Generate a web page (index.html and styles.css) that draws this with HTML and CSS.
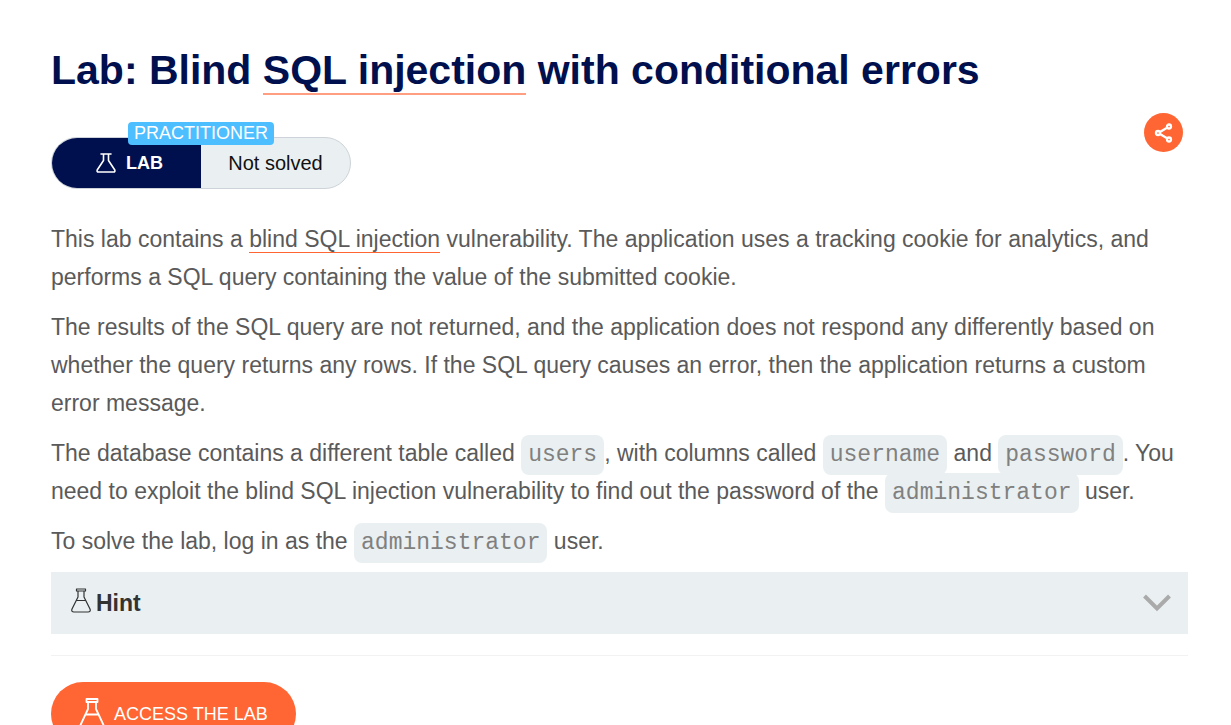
FILE: index.html
```html
<!DOCTYPE html>
<html lang="en">
<head>
<meta charset="utf-8">
<title>Lab: Blind SQL injection with conditional errors</title>
<meta name="viewport" content="width=device-width, initial-scale=1">
<link rel="stylesheet" href="styles.css">
</head>
<body>
<main class="page">
  <h1 class="title">Lab: Blind <a class="link" href="#sql-injection">SQL injection</a> with conditional errors</h1>

  <div class="toolbar">
    <div class="status">
      <span class="status-level">PRACTITIONER</span>
      <span class="status-kind">
        <svg class="status-icon" viewBox="0 0 20 20" fill="none" stroke="currentColor" stroke-width="1.6" stroke-linecap="round" stroke-linejoin="round" aria-hidden="true"><path d="M5 1H15M7.500 1V7.500L1.200 17Q.6 19 2.500 19H17.500Q19.400 19 18.800 17L12.500 7.500V1"/></svg>
        LAB
      </span>
      <span class="status-state">Not solved</span>
    </div>
    <button class="share" type="button" aria-label="Share">
      <svg class="share-icon" viewBox="0 0 20 20" fill="none" stroke="currentColor" stroke-width="2.300" aria-hidden="true"><circle cx="4" cy="10" r="2"/><circle cx="15" cy="3.500" r="2"/><circle cx="15" cy="16.500" r="2"/><path d="M6 9L13 4.700M6 11L13 15.300"/></svg>
    </button>
  </div>

  <div class="description">
    <p>This lab contains a <a class="link" href="#blind">blind SQL injection</a> vulnerability. The application uses a tracking cookie for analytics, and performs a SQL query containing the value of the submitted cookie.</p>
    <p>The results of the SQL query are not returned, and the application does not respond any differently based on whether the query returns any rows. If the SQL query causes an error, then the application returns a custom error message.</p>
    <p>The database contains a different table called <code>users</code>, with columns called <code>username</code> and <code>password</code>. You need to exploit the blind SQL injection vulnerability to find out the password of the <code>administrator</code> user.</p>
    <p>To solve the lab, log in as the <code>administrator</code> user.</p>
  </div>

  <button class="hint" type="button" aria-expanded="false">
    <svg class="hint-icon" viewBox="0 0 20 25" fill="none" stroke="currentColor" stroke-width="1.200" stroke-linejoin="round" aria-hidden="true"><path d="M5.500 1H14.500V3H5.500ZM7 3V9L1 21Q0 24 3 24H17Q20 24 19 21L13 9V3M5 12.500H15"/></svg>
    <span>Hint</span>
    <svg class="hint-arrow" viewBox="0 0 28 18" fill="none" stroke="currentColor" stroke-width="4" aria-hidden="true"><path d="M1.500 2L14 14.500L26.500 2"/></svg>
  </button>

  <hr class="rule">

  <a class="access" href="#lab">
    <svg class="access-icon" viewBox="0 0 26 32" fill="none" stroke="currentColor" stroke-width="1.800" stroke-linejoin="round" aria-hidden="true"><path d="M7.500 1H18.500V4H7.500ZM9 4V11L1.500 27Q0 31 4 31H22Q26 31 24.500 27L17 11V4M6.500 16.500H19.500"/></svg>
    ACCESS THE LAB
  </a>
</main>
</body>
</html>
```
FILE: styles.css
```css
* {
  box-sizing: border-box;
}

body {
  margin: 0;
  background: #fff;
  color: #5a5a5a;
  font-family: "Liberation Sans", Arial, sans-serif;
  font-size: 23px;
  line-height: 38px;
}

.page {
  padding: 44px 43px 0 51px;
}

.title {
  margin: 0;
  color: #00104e;
  font-size: 41px;
  line-height: 52px;
}

.link {
  color: inherit;
  text-decoration: none;
  border-bottom: 1px solid #ff6633;
}

.title .link {
  border-bottom: 2px solid #ff9e80;
}

.toolbar {
  display: flex;
  justify-content: space-between;
  align-items: flex-start;
  margin-top: 17px;
  padding-right: 5px;
}

.status {
  position: relative;
  display: flex;
  width: 300px;
  height: 52px;
  margin-top: 24px;
  border: 1px solid #cdd3d8;
  border-radius: 26px;
  background: #eaf0f2;
  color: #111;
  font-size: 20px;
  line-height: 48px;
}

.status-kind,
.status-state {
  display: flex;
  width: 50%;
  align-items: center;
  justify-content: center;
}

.status-kind {
  gap: 10px;
  padding-left: 6px;
  border-radius: 25px 0 0 25px;
  background: #00104e;
  color: #fff;
  font-size: 18px;
  font-weight: bold;
}

.status-icon {
  width: 20px;
  height: 20px;
}

.status-level {
  position: absolute;
  top: -16px;
  left: 50%;
  padding: 0 6px;
  transform: translateX(-50%);
  border-radius: 4px;
  background: #4dbeff;
  color: #fff;
  font-size: 18px;
  line-height: 23px;
}

.share {
  display: flex;
  align-items: center;
  justify-content: center;
  width: 39px;
  height: 39px;
  padding: 0;
  border: 0;
  border-radius: 50%;
  background: #ff6633;
  color: #fff;
}

.share-icon {
  width: 20px;
  height: 20px;
}

.description {
  margin-top: 31px;
}

.description p {
  margin: 0 0 12px;
}

code {
  padding: 7px;
  border-radius: 8px;
  background: #eaf0f2;
  color: #808080;
  font-family: "Liberation Mono", "Courier New", monospace;
  font-size: 23px;
  line-height: 1;
}

.hint {
  display: flex;
  align-items: center;
  width: 100%;
  height: 62px;
  padding: 0 17px 0 20px;
  gap: 5px;
  border: 0;
  background: #eaf0f2;
  color: #333;
  font: bold 23px "Liberation Sans", Arial, sans-serif;
}

.hint-icon {
  width: 20px;
  height: 25px;
  margin-bottom: 6px;
}

.hint-arrow {
  width: 28px;
  height: 18px;
  margin-left: auto;
  color: #aaa;
}

.rule {
  margin: 21px 0 26px;
  border: 0;
  border-top: 1px solid #f0f2f3;
}

.access {
  display: inline-flex;
  align-items: center;
  height: 64px;
  padding: 0 28px;
  gap: 9px;
  border-radius: 32px;
  background: #ff6633;
  color: #fff;
  font-size: 18px;
  text-decoration: none;
}

.access-icon {
  width: 26px;
  height: 32px;
}
```
